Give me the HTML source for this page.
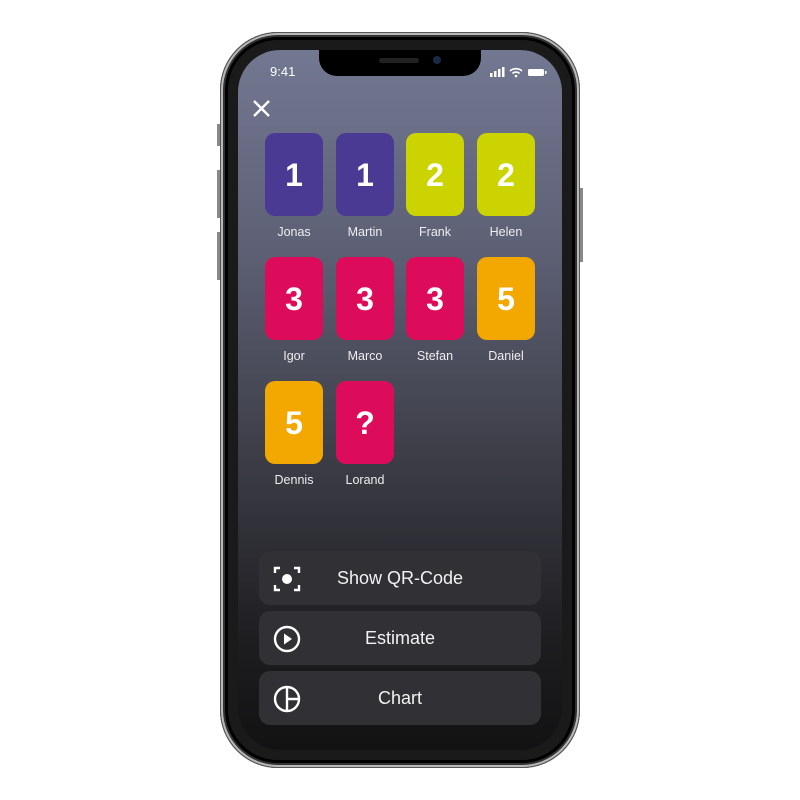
<!DOCTYPE html>
<html><head><style>
body{margin:0;width:800px;height:800px;background:#fff;position:relative;overflow:hidden;font-family:"Liberation Sans",sans-serif}
.phone{position:absolute;left:220px;top:32px;width:360px;height:736px;border-radius:58px;background:#1a1a1a;box-shadow:inset 0 0 0 1px #555,inset 0 0 0 3px #b8b8b8,inset 0 0 0 5px #333,inset 0 0 0 8px #000}
.btnside{position:absolute;background:#888;width:3px}
.screen{position:absolute;left:238px;top:50px;width:324px;height:700px;border-radius:42px;background:linear-gradient(#737892 0%,#5c5f73 30%,#3a3b44 60%,#1d1d20 85%,#121213 100%);overflow:hidden}
.notch{position:absolute;left:81px;top:0;width:162px;height:26px;background:#000;border-radius:0 0 18px 18px}
.card{position:absolute;width:58px;height:83px;border-radius:10px;color:#fff;font-weight:bold;font-size:32px;text-align:center;line-height:85px}
.nm{position:absolute;width:80px;text-align:center;color:#eee;font-size:12.5px}
.b{position:absolute;left:21px;width:282px;height:54px;border-radius:11px;background:#303035;color:#f2f2f2;font-size:18px;text-align:center;line-height:54px}
.b svg{position:absolute;left:14px;top:14px}
</style></head><body>
<div class="phone"></div>
<div class="btnside" style="left:217px;top:124px;height:22px"></div>
<div class="btnside" style="left:217px;top:170px;height:48px"></div>
<div class="btnside" style="left:217px;top:232px;height:48px"></div>
<div class="btnside" style="left:580px;top:188px;height:74px"></div>
<div class="screen">
<div class="notch"><div style="position:absolute;left:60px;top:8px;width:40px;height:5px;border-radius:3px;background:#222"></div><div style="position:absolute;left:114px;top:6px;width:8px;height:8px;border-radius:50%;background:#1a2a44"></div></div>
<div style="position:absolute;left:32px;top:14px;color:#fff;font-size:13px">9:41</div>
<svg style="position:absolute;left:252px;top:16px" width="60" height="12"><rect x="0" y="7" width="2.5" height="4" fill="#fff"/><rect x="4" y="5" width="2.5" height="6" fill="#fff"/><rect x="8" y="3" width="2.5" height="8" fill="#fff"/><rect x="12" y="1" width="2.5" height="10" fill="#fff"/><path d="M20 5a9 9 0 0 1 12 0M22.5 7.5a5 5 0 0 1 7 0" stroke="#fff" stroke-width="1.6" fill="none"/><circle cx="26" cy="10" r="1.3" fill="#fff"/><rect x="38" y="3" width="16" height="7" rx="1.5" fill="#fff"/><rect x="55" y="5" width="1.5" height="3" fill="#fff"/></svg>
<svg style="position:absolute;left:14px;top:49px" width="19" height="19"><path d="M2 2L17 17M17 2L2 17" stroke="#fff" stroke-width="2.4"/></svg>
<div class="card" style="left:27px;top:83px;background:#4a3a93">1</div>
<div class="card" style="left:98px;top:83px;background:#4a3a93">1</div>
<div class="card" style="left:168px;top:83px;background:#cbd400">2</div>
<div class="card" style="left:239px;top:83px;background:#cbd400">2</div>
<div class="nm" style="left:16px;top:175px">Jonas</div><div class="nm" style="left:87px;top:175px">Martin</div><div class="nm" style="left:157px;top:175px">Frank</div><div class="nm" style="left:228px;top:175px">Helen</div>
<div class="card" style="left:27px;top:207px;background:#dd0c5a">3</div>
<div class="card" style="left:98px;top:207px;background:#dd0c5a">3</div>
<div class="card" style="left:168px;top:207px;background:#dd0c5a">3</div>
<div class="card" style="left:239px;top:207px;background:#f2a800">5</div>
<div class="nm" style="left:16px;top:299px">Igor</div><div class="nm" style="left:87px;top:299px">Marco</div><div class="nm" style="left:157px;top:299px">Stefan</div><div class="nm" style="left:228px;top:299px">Daniel</div>
<div class="card" style="left:27px;top:331px;background:#f2a800">5</div>
<div class="card" style="left:98px;top:331px;background:#dd0c5a">?</div>
<div class="nm" style="left:16px;top:423px">Dennis</div><div class="nm" style="left:87px;top:423px">Lorand</div>
<div class="b" style="top:501px"><svg width="28" height="28"><path d="M2 8V3h5M21 3h5v5M26 20v5h-5M7 25H2v-5" stroke="#fff" stroke-width="2.4" fill="none"/><circle cx="14" cy="14" r="5" fill="#fff"/></svg>Show QR-Code</div>
<div class="b" style="top:561px"><svg width="28" height="28"><circle cx="14" cy="14" r="12" stroke="#fff" stroke-width="2.4" fill="none"/><path d="M11 8.5L19 14L11 19.5Z" fill="#fff"/></svg>Estimate</div>
<div class="b" style="top:621px"><svg width="28" height="28"><circle cx="14" cy="14" r="12" stroke="#fff" stroke-width="2.4" fill="none"/><path d="M14 2V26M14 14H26" stroke="#fff" stroke-width="2.4"/></svg>Chart</div>
</div>
</body></html>
